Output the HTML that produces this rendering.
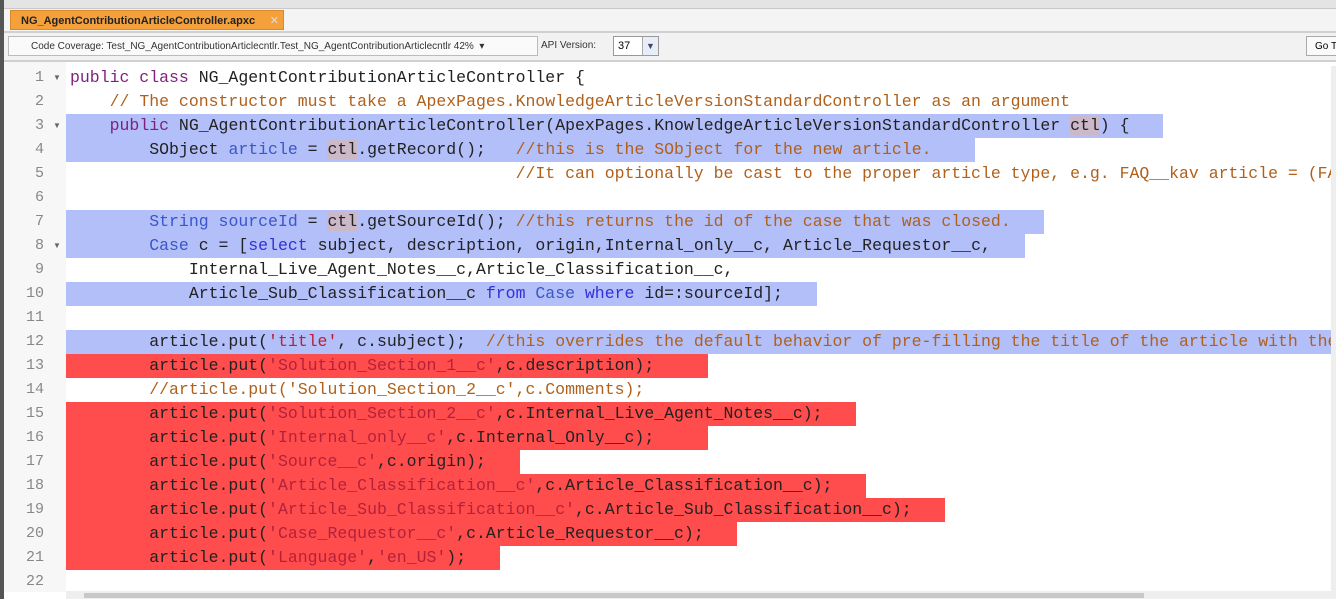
<!DOCTYPE html>
<html><head><style>
body{margin:0;width:1336px;height:599px;overflow:hidden;background:#f0f0f0;font-family:"Liberation Sans",sans-serif;position:relative}
.top{position:absolute;left:0;top:0;width:1336px;height:8px;background:#e4e4e4;border-bottom:1px solid #c8c8c8}
.tabrow{position:absolute;left:4px;top:9px;width:1332px;height:22px;background:#f4f4f4;border-bottom:2px solid #d0d0d0}
.tab{position:absolute;left:6px;top:1px;height:20px;width:274px;background:#f4a13c;border:1px solid #d88a2a;font-size:11px;font-weight:bold;line-height:20px;padding-left:10px;box-sizing:border-box;color:#222}
.tab span{position:absolute;right:4px;top:0;color:#ddd;font-weight:normal}
.tb{position:absolute;left:4px;top:33px;width:1332px;height:27px;background:#f2f2f2;border-bottom:2px solid #d0d0d0}
.cc{position:absolute;left:4px;top:3px;width:530px;height:20px;border:1px solid #bbb;background:#fafafa;font-size:10px;line-height:20px;padding-left:22px;box-sizing:border-box;color:#333}
.api{position:absolute;left:537px;top:3px;font-size:10px;line-height:20px;color:#333}
.sel{position:absolute;left:609px;top:3px;width:46px;height:20px;border:1px solid #999;background:#fff;box-sizing:border-box;font-size:11px;line-height:18px;padding-left:4px}
.sel i{position:absolute;right:0;top:0;width:15px;height:18px;background:#e8eef8;border-left:1px solid #aaa;font-style:normal;color:#446;font-size:9px;text-align:center}
.go{position:absolute;left:1302px;top:3px;width:40px;height:20px;border:1px solid #aaa;background:#fafafa;font-size:10px;line-height:20px;padding-left:8px;box-sizing:border-box;overflow:hidden}
.ed{position:absolute;left:4px;top:62px;width:1332px;height:537px;background:#fff}
.lb{position:absolute;left:0;top:0;width:4px;height:599px;background:#555}
.gut{position:absolute;left:4px;top:62px;width:62px;height:530px;background:#f7f7f7}
.ln{position:absolute;left:4px;width:40px;text-align:right;font-family:"Liberation Mono",monospace;font-size:15px;color:#888;height:24px;line-height:24px}
.fa{position:absolute;left:53px;font-size:8px;color:#666;height:24px;line-height:24px}
.clip{position:absolute;left:0;top:0;width:1331px;height:599px;overflow:hidden}
.hl{position:absolute;left:66px;height:24px}
.b{background:#b3bff9}.r{background:#ff4d4d}
.code{position:absolute;left:70px;font-family:"Liberation Mono",monospace;font-size:16.5px;white-space:pre;height:24px;line-height:24px;color:#222}
.k{color:#7f1f7f}.c{color:#b0601a}.s{color:#b5213b}.t{color:#3a56c8}.q{color:#3030d8}.v{color:#3a56c8}.x{background:#cbb8c8}
.hs{position:absolute;left:66px;top:591px;width:1270px;height:8px;background:#eee}
.hs div{position:absolute;left:18px;top:2px;width:1060px;height:5px;background:#c8c8c8}
.vs{position:absolute;left:1331px;top:66px;width:5px;height:525px;background:#eee}
</style></head><body>
<div class="top"></div>
<div class="tabrow"><div class="tab">NG_AgentContributionArticleController.apxc<span>✕</span></div></div>
<div class="tb"><div class="cc">Code Coverage: Test_NG_AgentContributionArticlecntlr.Test_NG_AgentContributionArticlecntlr 42% &nbsp;▾</div><div class="api">API Version:</div><div class="sel">37<i>▼</i></div><div class="go">Go To</div></div>
<div class="ed"></div>
<div class="lb"></div>
<div class="gut"></div>
<div class="clip">
<div class="hl b" style="top:114px;width:1097px"></div>
<div class="hl b" style="top:138px;width:909px"></div>
<div class="hl b" style="top:210px;width:978px"></div>
<div class="hl b" style="top:234px;width:959px"></div>
<div class="hl b" style="top:282px;width:751px"></div>
<div class="hl b" style="top:330px;width:1270px"></div>
<div class="hl r" style="top:354px;width:642px"></div>
<div class="hl r" style="top:402px;width:790px"></div>
<div class="hl r" style="top:426px;width:642px"></div>
<div class="hl r" style="top:450px;width:454px"></div>
<div class="hl r" style="top:474px;width:800px"></div>
<div class="hl r" style="top:498px;width:879px"></div>
<div class="hl r" style="top:522px;width:671px"></div>
<div class="hl r" style="top:546px;width:434px"></div>

<div class="code" style="top:66px"><span class="k">public class</span> NG_AgentContributionArticleController {</div>
<div class="code" style="top:90px">    <span class="c">// The constructor must take a ApexPages.KnowledgeArticleVersionStandardController as an argument</span></div>
<div class="code" style="top:114px">    <span class="k">public</span> NG_AgentContributionArticleController(ApexPages.KnowledgeArticleVersionStandardController <span class="x">ctl</span>) {</div>
<div class="code" style="top:138px">        SObject <span class="v">article</span> = <span class="x">ctl</span>.getRecord();   <span class="c">//this is the SObject for the new article.</span></div>
<div class="code" style="top:162px">                                             <span class="c">//It can optionally be cast to the proper article type, e.g. FAQ__kav article = (FAQ__kav) ctl.getRecord();</span></div>
<div class="code" style="top:210px">        <span class="t">String</span> <span class="v">sourceId</span> = <span class="x">ctl</span>.getSourceId(); <span class="c">//this returns the id of the case that was closed.</span></div>
<div class="code" style="top:234px">        <span class="t">Case</span> c = [<span class="q">select</span> subject, description, origin,Internal_only__c, Article_Requestor__c,</div>
<div class="code" style="top:258px">            Internal_Live_Agent_Notes__c,Article_Classification__c,</div>
<div class="code" style="top:282px">            Article_Sub_Classification__c <span class="q">from</span> <span class="t">Case</span> <span class="q">where</span> id=:sourceId];</div>
<div class="code" style="top:330px">        article.put(<span class="s">'title'</span>, c.subject);  <span class="c">//this overrides the default behavior of pre-filling the title of the article with the subject of the closed case.</span></div>
<div class="code" style="top:354px">        article.put(<span class="s">'Solution_Section_1__c'</span>,c.description);</div>
<div class="code" style="top:378px">        <span class="c">//article.put('Solution_Section_2__c',c.Comments);</span></div>
<div class="code" style="top:402px">        article.put(<span class="s">'Solution_Section_2__c'</span>,c.Internal_Live_Agent_Notes__c);</div>
<div class="code" style="top:426px">        article.put(<span class="s">'Internal_only__c'</span>,c.Internal_Only__c);</div>
<div class="code" style="top:450px">        article.put(<span class="s">'Source__c'</span>,c.origin);</div>
<div class="code" style="top:474px">        article.put(<span class="s">'Article_Classification__c'</span>,c.Article_Classification__c);</div>
<div class="code" style="top:498px">        article.put(<span class="s">'Article_Sub_Classification__c'</span>,c.Article_Sub_Classification__c);</div>
<div class="code" style="top:522px">        article.put(<span class="s">'Case_Requestor__c'</span>,c.Article_Requestor__c);</div>
<div class="code" style="top:546px">        article.put(<span class="s">'Language'</span>,<span class="s">'en_US'</span>);</div>
</div>

<div class="ln" style="top:66px">1</div><div class="fa" style="top:66px">▼</div>
<div class="ln" style="top:90px">2</div>
<div class="ln" style="top:114px">3</div><div class="fa" style="top:114px">▼</div>
<div class="ln" style="top:138px">4</div>
<div class="ln" style="top:162px">5</div>
<div class="ln" style="top:186px">6</div>
<div class="ln" style="top:210px">7</div>
<div class="ln" style="top:234px">8</div><div class="fa" style="top:234px">▼</div>
<div class="ln" style="top:258px">9</div>
<div class="ln" style="top:282px">10</div>
<div class="ln" style="top:306px">11</div>
<div class="ln" style="top:330px">12</div>
<div class="ln" style="top:354px">13</div>
<div class="ln" style="top:378px">14</div>
<div class="ln" style="top:402px">15</div>
<div class="ln" style="top:426px">16</div>
<div class="ln" style="top:450px">17</div>
<div class="ln" style="top:474px">18</div>
<div class="ln" style="top:498px">19</div>
<div class="ln" style="top:522px">20</div>
<div class="ln" style="top:546px">21</div>
<div class="ln" style="top:570px">22</div>
<div class="vs"></div>
<div class="hs"><div></div></div>
</body></html>
